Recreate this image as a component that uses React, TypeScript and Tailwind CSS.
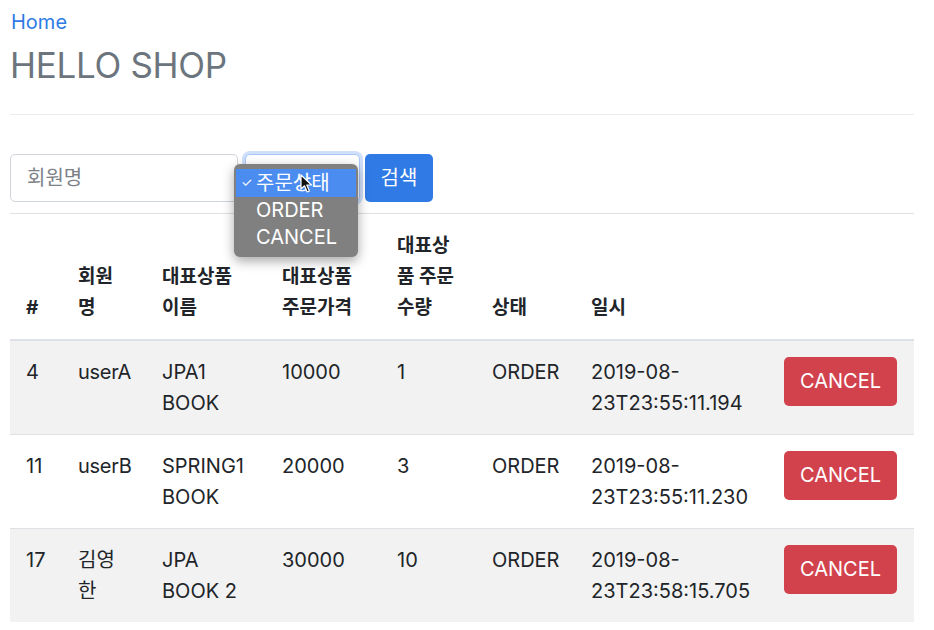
import React from "react";

const rows = [
  { id: "4", name: "userA", item: ["JPA1", "BOOK"], price: "10000", count: "1", status: "ORDER", date: ["2019-08-", "23T23:55:11.194"] },
  { id: "11", name: "userB", item: ["SPRING1", "BOOK"], price: "20000", count: "3", status: "ORDER", date: ["2019-08-", "23T23:55:11.230"] },
  { id: "17", name: "김영한", item: ["JPA", "BOOK 2"], price: "30000", count: "10", status: "ORDER", date: ["2019-08-", "23T23:58:15.705"] },
];

const font = { fontFamily: "Inter, 'Noto Sans CJK KR', sans-serif" };

export default function App() {
  return (
    <div className="w-[934px] h-[630px] bg-white overflow-hidden text-[#212529]" style={font}>
      <div className="ml-[10px] w-[904px]">
        <div className="pt-[7px] text-[20px] leading-[31px] text-[#2f7ae5]">
          <a className="ml-[1px]">Home</a>
        </div>
        <h3 className="mt-[6px] text-[35px] leading-[42px] text-[#6c757d] tracking-[-0.3px]">HELLO SHOP</h3>
        <div className="mt-[28px] h-px bg-[#e9ecef]" />

        <div className="mt-[39px] flex items-start">
          <div className="w-[228px] h-[48px] border border-[#ced4da] rounded-[5px] flex items-center pl-[16px] text-[20px] text-[#7b8187]">
            회원명
          </div>
          <div className="relative ml-[7px]">
            <div className="w-[115px] h-[48px] border border-[#a8c6f7] rounded-[5px] bg-white shadow-[0_0_0_3px_rgba(120,165,240,0.35)]" />
            <div className="absolute left-[-11px] top-[10px] w-[124px] rounded-[6px] bg-[#808080] shadow-[0_4px_12px_rgba(0,0,0,0.35)] pt-[5px] pb-[6px] text-white text-[20px] z-10">
              <div className="mx-[2px] h-[28px] bg-[#4b8cf0] flex items-center">
                <span className="w-[20px] text-[13px] pl-[5px]">✓</span>
                <span>주문상태</span>
              </div>
              <div className="h-[27px] leading-[27px] pl-[22px]">ORDER</div>
              <div className="h-[27px] leading-[27px] pl-[22px]">CANCEL</div>
              <svg className="absolute left-[66px] top-[10px]" width="13" height="20" viewBox="0 0 13 20">
                <path d="M1 1 L1 15 L4.5 11.8 L7.2 18 L9.4 17 L6.8 11 L11.5 11 Z" fill="#111" stroke="#fff" strokeWidth="1.2" strokeLinejoin="round" />
              </svg>
            </div>
          </div>
          <button className="ml-[5px] w-[68px] h-[48px] rounded-[5px] bg-[#2f7ae5] text-white text-[20px]">
            검색
          </button>
        </div>

        <table className="mt-[11px] w-[904px] table-fixed border-collapse text-[20px] leading-[31px]">
          <colgroup>
            <col className="w-[52px]" />
            <col className="w-[84px]" />
            <col className="w-[120px]" />
            <col className="w-[115px]" />
            <col className="w-[95px]" />
            <col className="w-[99px]" />
            <col className="w-[193px]" />
            <col className="w-[146px]" />
          </colgroup>
          <thead>
            <tr className="border-t border-[#dee2e6] border-b-2">
              {["#", "회원명", "대표상품 이름", "대표상품 주문가격", "대표상품 주문 수량", "상태", "일시", ""].map((h, i) => (
                <th key={i} className="align-bottom text-left font-bold px-[16px] pt-[16px] pb-[16px] border-b-2 border-[#dee2e6] text-[19px] break-all">
                  {h}
                </th>
              ))}
            </tr>
          </thead>
          <tbody>
            {rows.map((r, i) => (
              <tr key={r.id} className={`border-t border-[#dee2e6] ${i % 2 === 0 ? "bg-[#f2f2f2]" : "bg-white"}`}>
                <td className="align-top px-[16px] pt-[16px] pb-[15px]">{r.id}</td>
                <td className="align-top px-[16px] pt-[16px] pb-[15px] whitespace-normal">
                  {r.name === "김영한" ? (
                    <>
                      <div>김영</div>
                      <div>한</div>
                    </>
                  ) : (
                    <span className="whitespace-nowrap tracking-[-0.3px]">{r.name}</span>
                  )}
                </td>
                <td className="align-top px-[16px] pt-[16px] pb-[15px] whitespace-nowrap">
                  <div>{r.item[0]}</div>
                  <div>{r.item[1]}</div>
                </td>
                <td className="align-top px-[16px] pt-[16px] pb-[15px]">{r.price}</td>
                <td className="align-top px-[16px] pt-[16px] pb-[15px]">{r.count}</td>
                <td className="align-top px-[16px] pt-[16px] pb-[15px]">{r.status}</td>
                <td className="align-top px-[16px] pt-[16px] pb-[15px] whitespace-nowrap">
                  <div>{r.date[0]}</div>
                  <div>{r.date[1]}</div>
                </td>
                <td className="align-top px-[16px] pt-[16px] pb-[15px]">
                  <button className="w-[113px] h-[49px] rounded-[5px] bg-[#d2424d] text-white text-[20px]">CANCEL</button>
                </td>
              </tr>
            ))}
          </tbody>
        </table>
      </div>
    </div>
  );
}
